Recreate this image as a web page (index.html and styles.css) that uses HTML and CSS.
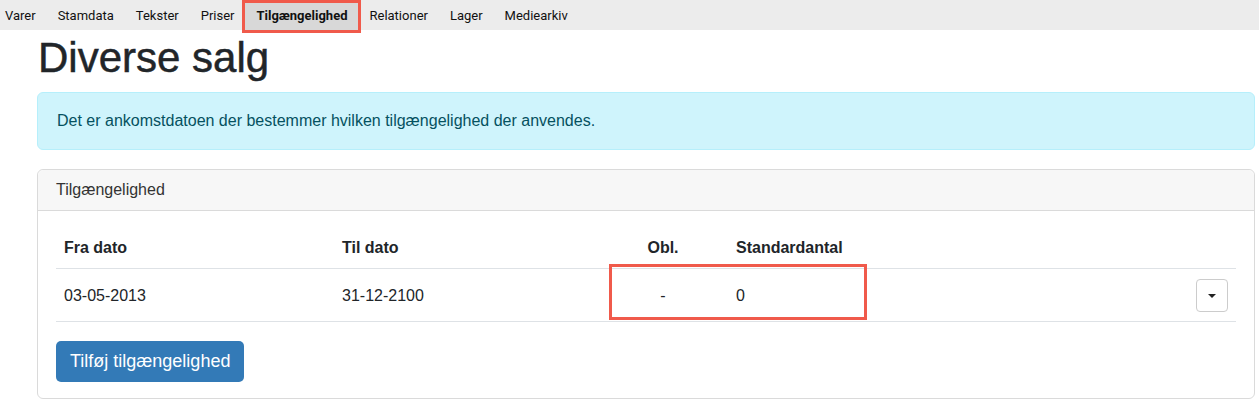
FILE: index.html
```html
<!DOCTYPE html>
<html lang="da">

<head>
    <meta charset="UTF-8">
    <meta name="viewport" content="width=device-width, initial-scale=1.0">
    <title>Diverse salg - Tilgængelighed</title>
    <link rel="stylesheet" href="styles.css">
</head>

<body>
    <nav class="tabs">
        <a href="#">Varer</a>
        <a href="#">Stamdata</a>
        <a href="#">Tekster</a>
        <a href="#">Priser</a>
        <a href="#" class="active">Tilgængelighed</a>
        <a href="#">Relationer</a>
        <a href="#">Lager</a>
        <a href="#">Mediearkiv</a>
    </nav>

    <main class="content">
        <h1>Diverse salg</h1>

        <div class="alert-info">Det er ankomstdatoen der bestemmer hvilken tilgængelighed der anvendes.</div>

        <div class="card">
            <div class="card-header">Tilgængelighed</div>
            <div class="card-body">
                <div class="table-wrap">
                    <table class="avail-table">
                        <thead>
                            <tr>
                                <th class="col-from">Fra dato</th>
                                <th class="col-to">Til dato</th>
                                <th class="col-req">Obl.</th>
                                <th class="col-qty">Standardantal</th>
                                <th class="col-act"></th>
                            </tr>
                        </thead>
                        <tbody>
                            <tr>
                                <td>03-05-2013</td>
                                <td>31-12-2100</td>
                                <td class="col-req">-</td>
                                <td>0</td>
                                <td class="col-act">
                                    <button class="caret-btn" aria-label="Flere valg"><span class="caret"></span></button>
                                </td>
                            </tr>
                        </tbody>
                    </table>
                    <!-- highlight marker -->
                    <div class="highlight"></div>
                </div>

                <button class="btn-primary">Tilføj tilgængelighed</button>
            </div>
        </div>
    </main>
</body>

</html>
```

FILE: styles.css
```css
body {
    margin: 0;
    font-family: "Liberation Sans", Arial, sans-serif;
    color: #212529;
    background: #fff;
}

/* top tabs */
.tabs {
    display: flex;
    height: 30px;
    padding-top: 3px;
    box-sizing: border-box;
    background-color: #ececec;
    font-family: Roboto, "Liberation Sans", sans-serif;
    font-size: 13px;
}

.tabs a {
    padding: 0 11px;
    line-height: 26px;
    color: #111;
    text-decoration: none;
}

.tabs a:first-child {
    padding-left: 5px;
}

.tabs a.active {
    background-color: #d8d8d8;
    font-weight: bold;
    outline: 3px solid #f05a4b;
}

.content {
    padding: 0 4px 0 37px;
}

h1 {
    font-size: 42px;
    font-weight: 500;
    line-height: 50px;
    margin: 3px 0 9px 1px;
    color: #212529;
    -webkit-text-stroke: 0.5px #212529;
}

.alert-info {
    background-color: #cff4fc;
    border: 1px solid #b6effb;
    border-radius: 6px;
    color: #055160;
    font-size: 16px;
    line-height: 24px;
    padding: 16px 19px;
    margin-bottom: 19px;
}

.card {
    border: 1px solid #dadada;
    border-radius: 6px;
}

.card-header {
    background-color: #f7f7f7;
    border-bottom: 1px solid #dadada;
    border-radius: 6px 6px 0 0;
    padding: 8px 18px;
    line-height: 24px;
    font-size: 16px;
    color: #333;
}

.card-body {
    padding: 17px 18px 16px;
}

.table-wrap {
    position: relative;
}

.avail-table {
    width: 100%;
    border-collapse: collapse;
    font-size: 16px;
    line-height: 24px;
    margin-bottom: 19px;
}

.avail-table th,
.avail-table td {
    text-align: left;
    border-bottom: 1px solid #dee2e6;
    vertical-align: middle;
}

.avail-table th {
    padding: 8px;
    font-weight: bold;
}

.avail-table td {
    padding: 10px 8px 9px;
}

.col-from {
    width: 262px;
}

.col-to {
    width: 248px;
}

.avail-table .col-req {
    width: 114px;
    text-align: center;
}

.avail-table .col-act {
    width: 32px;
    text-align: right;
}

.caret-btn {
    width: 32px;
    height: 33px;
    background: #fff;
    border: 1px solid #ccc;
    border-radius: 4px;
    padding: 0;
    display: flex;
    align-items: center;
    justify-content: center;
    margin-left: auto;
    cursor: pointer;
}

.caret {
    width: 0;
    height: 0;
    border-left: 4px solid transparent;
    border-right: 4px solid transparent;
    border-top: 4px solid #222;
}

.highlight {
    position: absolute;
    left: 553px;
    top: 36px;
    width: 258px;
    height: 56px;
    border: 3px solid #f05a4b;
    box-sizing: border-box;
    pointer-events: none;
}

.btn-primary {
    background-color: #337ab7;
    color: white;
    border: none;
    border-radius: 5px;
    font-family: "Liberation Sans", Arial, sans-serif;
    font-size: 18px;
    line-height: 25px;
    padding: 8px 14px;
    cursor: pointer;
}
```
